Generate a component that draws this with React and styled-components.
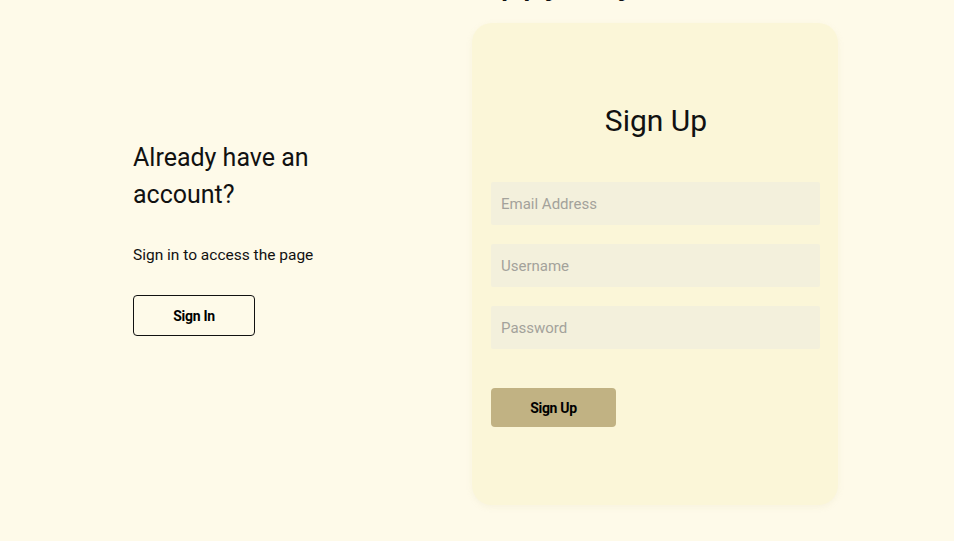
import React from "react";
import styled, { createGlobalStyle } from "styled-components";

const GlobalStyle = createGlobalStyle`
	html, body {
		margin: 0;
		padding: 0;
		background: #fefae9;
		font-family: Roboto, "Liberation Sans", sans-serif;
		color: #111;
	}
	* { box-sizing: border-box; }
`;

const Page = styled.div`
	width: 954px;
	height: 541px;
	overflow: hidden;
	background: #fefae9;
`;

const TopTitle = styled.h1`
	margin: -46px 0 0 0;
	height: 48px;
	font-size: 40px;
	line-height: 52px;
	font-weight: 400;
	text-align: center;
	padding-left: 132px;
	color: #111;
	white-space: nowrap;
`;

const Row = styled.div`
	display: flex;
	align-items: flex-start;
	padding: 21px 0 0 133px;
`;

const Side = styled.div`
	width: 250px;
	margin-top: 116px;
`;

const SideTitle = styled.h2`
	margin: 0;
	width: 200px;
	font-size: 25px;
	line-height: 37px;
	font-weight: 400;
`;

const SideText = styled.p`
	margin: 32px 0 0;
	font-size: 15.5px;
	line-height: 20px;
`;

const Button = styled.button`
	display: block;
	width: ${(props) => (props.filled ? "125px" : "122px")};
	height: ${(props) => (props.filled ? "39px" : "41px")};
	border-radius: 4px;
	border: ${(props) => (props.filled ? "none" : "1px solid #111")};
	background: ${(props) => (props.filled ? "#c1b283" : "transparent")};
	font-family: Roboto, "Liberation Sans", sans-serif;
	font-size: 14px;
	font-weight: 700;
	letter-spacing: -0.3px;
	color: #000;
	cursor: pointer;
	padding: 0;
`;

const SideButton = styled(Button)`
	margin-top: 30px;
`;

const Card = styled.div`
	width: 366px;
	height: 482px;
	margin-left: 89px;
	padding: 80px 18px 0 19px;
	border-radius: 20px;
	background: #fbf6d8;
	box-shadow: 0 2px 6px rgba(200, 190, 140, 0.12);
`;

const CardTitle = styled.h2`
	margin: 0 0 43px;
	font-size: 30px;
	line-height: 36px;
	font-weight: 400;
	text-align: center;
	padding-left: 1px;
`;

const Form = styled.form`
	display: flex;
	flex-direction: column;
	gap: 19px;
`;

const Input = styled.input`
	width: 100%;
	height: 43px;
	border: none;
	outline: none;
	border-radius: 2px;
	background: #f3f0dc;
	padding: 0 10px;
	font-family: Roboto, "Liberation Sans", sans-serif;
	font-size: 15px;
	color: #333;

	&::placeholder {
		color: #a3a29b;
	}
`;

const SubmitButton = styled(Button)`
	margin-top: 20px;
`;

export default function App() {
	return (
		<Page>
			<GlobalStyle />
			<TopTitle>Happy day</TopTitle>
			<Row>
				<Side>
					<SideTitle>Already have an account?</SideTitle>
					<SideText>Sign in to access the page</SideText>
					<SideButton type='button'>Sign In</SideButton>
				</Side>
				<Card>
					<CardTitle>Sign Up</CardTitle>
					<Form onSubmit={(e) => e.preventDefault()}>
						<Input type='email' placeholder='Email Address' />
						<Input type='text' placeholder='Username' />
						<Input type='password' placeholder='Password' />
						<SubmitButton filled type='submit'>
							Sign Up
						</SubmitButton>
					</Form>
				</Card>
			</Row>
		</Page>
	);
}
